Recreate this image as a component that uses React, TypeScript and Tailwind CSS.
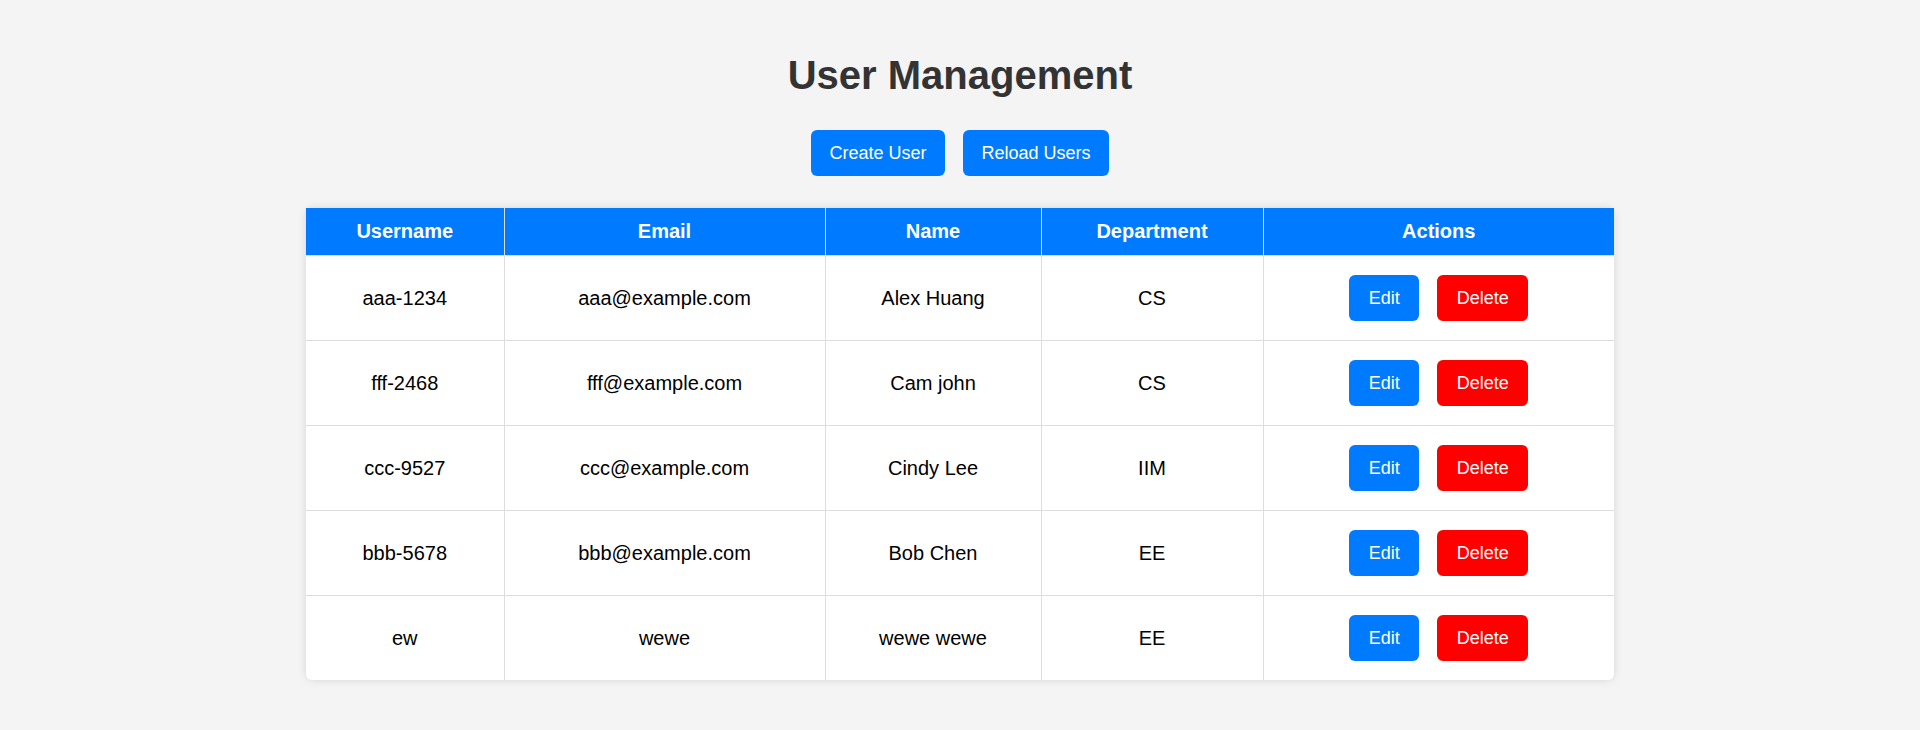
import React from "react";

interface User {
  username: string;
  email: string;
  name: string;
  department: string;
}

const users: User[] = [
  { username: "aaa-1234", email: "aaa@example.com", name: "Alex Huang", department: "CS" },
  { username: "fff-2468", email: "fff@example.com", name: "Cam john", department: "CS" },
  { username: "ccc-9527", email: "ccc@example.com", name: "Cindy Lee", department: "IIM" },
  { username: "bbb-5678", email: "bbb@example.com", name: "Bob Chen", department: "EE" },
  { username: "ew", email: "wewe", name: "wewe wewe", department: "EE" },
];

const columns = ["Username", "Email", "Name", "Department", "Actions"];

const App = () => {
  return (
    <div className="min-h-[730px] bg-[#f4f4f4] pt-[52px] font-['Liberation_Sans',Arial,sans-serif] text-black">
      <h1 className="text-center text-[40px] font-bold leading-[46px] text-[#333]">User Management</h1>

      {/* Top actions */}
      <div className="mt-[32px] flex justify-center gap-[18px]">
        <button className="h-[46px] w-[134px] rounded-md bg-[#007bff] text-[18px] text-white">Create User</button>
        <button className="h-[46px] w-[146px] rounded-md bg-[#007bff] text-[18px] text-white">Reload Users</button>
      </div>

      <div className="mx-auto mt-[32px] w-[1308px] rounded-md bg-white shadow-[0_0_8px_rgba(0,0,0,0.12)]">
        <table className="w-full border-collapse text-center text-[20px]">
          <colgroup>
            <col className="w-[198px]" />
            <col className="w-[321px]" />
            <col className="w-[216px]" />
            <col className="w-[222px]" />
            <col />
          </colgroup>
          <thead>
            <tr className="bg-[#007bff] text-white">
              {columns.map((col, i) => (
                <th
                  key={col}
                  className={`border-b border-[#ddd] py-[12px] font-bold leading-[23px] ${
                    i < columns.length - 1 ? "border-r" : ""
                  }`}
                >
                  {col}
                </th>
              ))}
            </tr>
          </thead>
          <tbody>
            {users.map((u, idx) => {
              const last = idx === users.length - 1;
              const cell = `border-[#ddd] py-[19px] ${last ? "" : "border-b"}`;
              return (
                <tr key={u.username}>
                  <td className={`${cell} border-r`}>{u.username}</td>
                  <td className={`${cell} border-r`}>{u.email}</td>
                  <td className={`${cell} border-r`}>{u.name}</td>
                  <td className={`${cell} border-r`}>{u.department}</td>
                  <td className={cell}>
                    <div className="flex justify-center gap-[18px]">
                      <button className="h-[46px] w-[70px] rounded-md bg-[#007bff] text-[18px] text-white">Edit</button>
                      <button className="h-[46px] w-[91px] rounded-md bg-[#ff0000] text-[18px] text-white">Delete</button>
                    </div>
                  </td>
                </tr>
              );
            })}
          </tbody>
        </table>
      </div>
    </div>
  );
};

export default App;
